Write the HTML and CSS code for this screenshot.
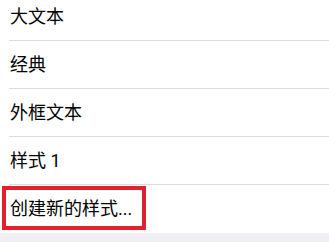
FILE: index.html
```html
<!DOCTYPE html>
<html lang="zh-CN">
<head>
<meta charset="utf-8">
<link rel="stylesheet" href="styles.css">
</head>
<body>
<div class="list">
  <div class="row"><span class="label">大文本</span></div>
  <div class="row"><span class="label">经典</span></div>
  <div class="row"><span class="label">外框文本</span></div>
  <div class="row"><span class="label">样式 1</span></div>
  <div class="row last"><span class="label">创建新的样式...</span><div class="highlight"></div></div>
</div>
<div class="footer"></div>
</body>
</html>
```
FILE: styles.css
```css
html, body {
  margin: 0;
  padding: 0;
  background: #ffffff;
  overflow: hidden;
}
body {
  width: 329px;
  height: 242px;
  font-family: "Roboto", "Noto Sans CJK SC", sans-serif;
}
.list {
  margin-top: -7px;
  display: flex;
  flex-direction: column;
}
.row {
  position: relative;
  height: 47px;
  margin-left: 9px;
  padding-left: 1px;
  border-bottom: 1px solid #dcdcdf;
  display: flex;
  align-items: center;
}
.row.last {
  height: 48px;
  border-bottom: none;
}
.label {
  font-size: 18px;
  color: #000000;
  line-height: 1;
}
.highlight {
  position: absolute;
  left: -7px;
  top: 1px;
  width: 144px;
  height: 44px;
  box-sizing: border-box;
  border: 4px solid #e1222c;
}
.footer {
  height: 20px;
  background: #efeff4;
}
```
